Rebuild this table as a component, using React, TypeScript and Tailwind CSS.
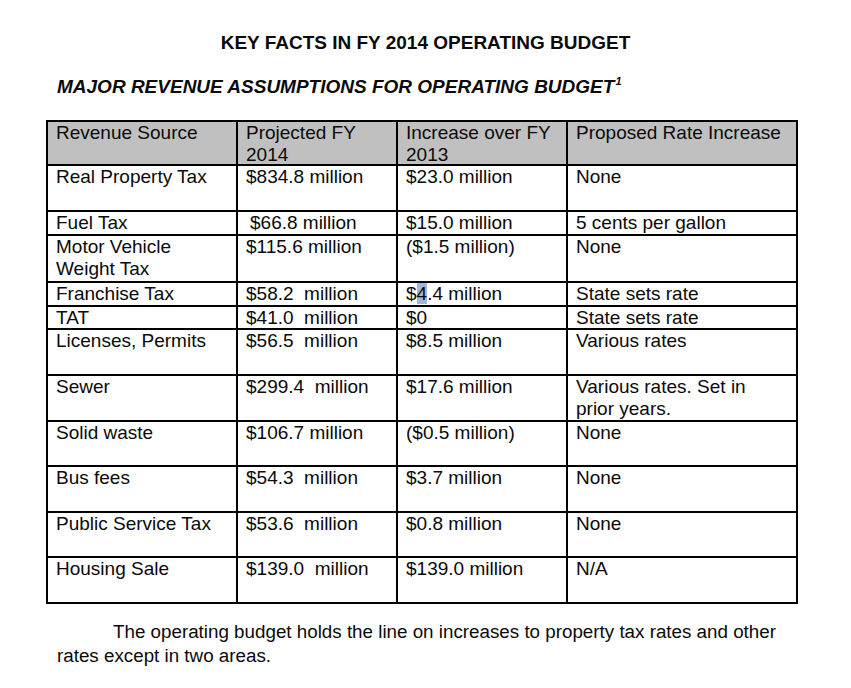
import type { ReactNode } from 'react';

// 予算表の行データ
interface Row {
  source: ReactNode;
  projected: ReactNode;
  increase: ReactNode;
  rate: ReactNode;
  h: string;
}

const rows: Row[] = [
  { source: 'Real Property Tax', projected: '$834.8 million', increase: '$23.0 million', rate: 'None', h: 'h-[46px]' },
  { source: 'Fuel Tax', projected: <span className="pl-1">$66.8 million</span>, increase: '$15.0 million', rate: '5 cents per gallon', h: 'h-[24px]' },
  { source: <>Motor Vehicle<br />Weight Tax</>, projected: '$115.6 million', increase: '($1.5 million)', rate: 'None', h: 'h-[47px]' },
  {
    source: 'Franchise Tax',
    projected: '$58.2  million',
    increase: <>$<span className="bg-[#9db8da]">4</span>.4 million</>,
    rate: 'State sets rate',
    h: 'h-[24px]',
  },
  { source: 'TAT', projected: '$41.0  million', increase: '$0', rate: 'State sets rate', h: 'h-[23px]' },
  { source: 'Licenses, Permits', projected: '$56.5  million', increase: '$8.5 million', rate: 'Various rates', h: 'h-[46px]' },
  { source: 'Sewer', projected: '$299.4  million', increase: '$17.6 million', rate: <>Various rates. Set in<br />prior years.</>, h: 'h-[46px]' },
  { source: 'Solid waste', projected: '$106.7 million', increase: '($0.5 million)', rate: 'None', h: 'h-[45px]' },
  { source: 'Bus fees', projected: '$54.3  million', increase: '$3.7 million', rate: 'None', h: 'h-[46px]' },
  { source: 'Public Service Tax', projected: '$53.6  million', increase: '$0.8 million', rate: 'None', h: 'h-[45px]' },
  { source: 'Housing Sale', projected: '$139.0  million', increase: '$139.0 million', rate: 'N/A', h: 'h-[46px]' },
];

const cols = 'grid grid-cols-[188px_160px_170px_230px]';

export default function App() {
  return (
    <div className="min-h-screen bg-white text-[#0a0a0a] font-['Liberation_Sans',Arial,sans-serif] text-[19px] leading-[22px]">
      <div className="pt-[32px] text-center font-bold text-[19px]">KEY FACTS IN FY 2014 OPERATING BUDGET</div>

      <div className="pl-[57px] pt-[22px] font-bold italic text-[19px]">
        MAJOR REVENUE ASSUMPTIONS FOR OPERATING BUDGET
        <sup className="text-[11px] relative -top-[8px] left-[1px]">1</sup>
      </div>

      {/* 表 */}
      <div className="ml-[46px] mt-[22px] w-[752px] border-2 border-black">
        <div className={`${cols} h-[42px] bg-[#c0c0c0]`}>
          <div className="pl-2">Revenue Source</div>
          <div className="pl-2 border-l-2 border-black">Projected FY<br />2014</div>
          <div className="pl-2 border-l-2 border-black">Increase over FY<br />2013</div>
          <div className="pl-2 border-l-2 border-black">Proposed Rate Increase</div>
        </div>
        {rows.map((r, i) => (
          <div key={i} className={`${cols} ${r.h} border-t-2 border-black`}>
            <div className="pl-2">{r.source}</div>
            <div className="pl-2 border-l-2 border-black whitespace-pre">{r.projected}</div>
            <div className="pl-2 border-l-2 border-black whitespace-pre">{r.increase}</div>
            <div className="pl-2 border-l-2 border-black">{r.rate}</div>
          </div>
        ))}
      </div>

      <p className="pl-[57px] pr-[50px] pt-[16px] text-[18.8px] leading-[24px] indent-[56px]">
        The operating budget holds the line on increases to property tax rates and other rates except in two areas.
      </p>
    </div>
  );
}
